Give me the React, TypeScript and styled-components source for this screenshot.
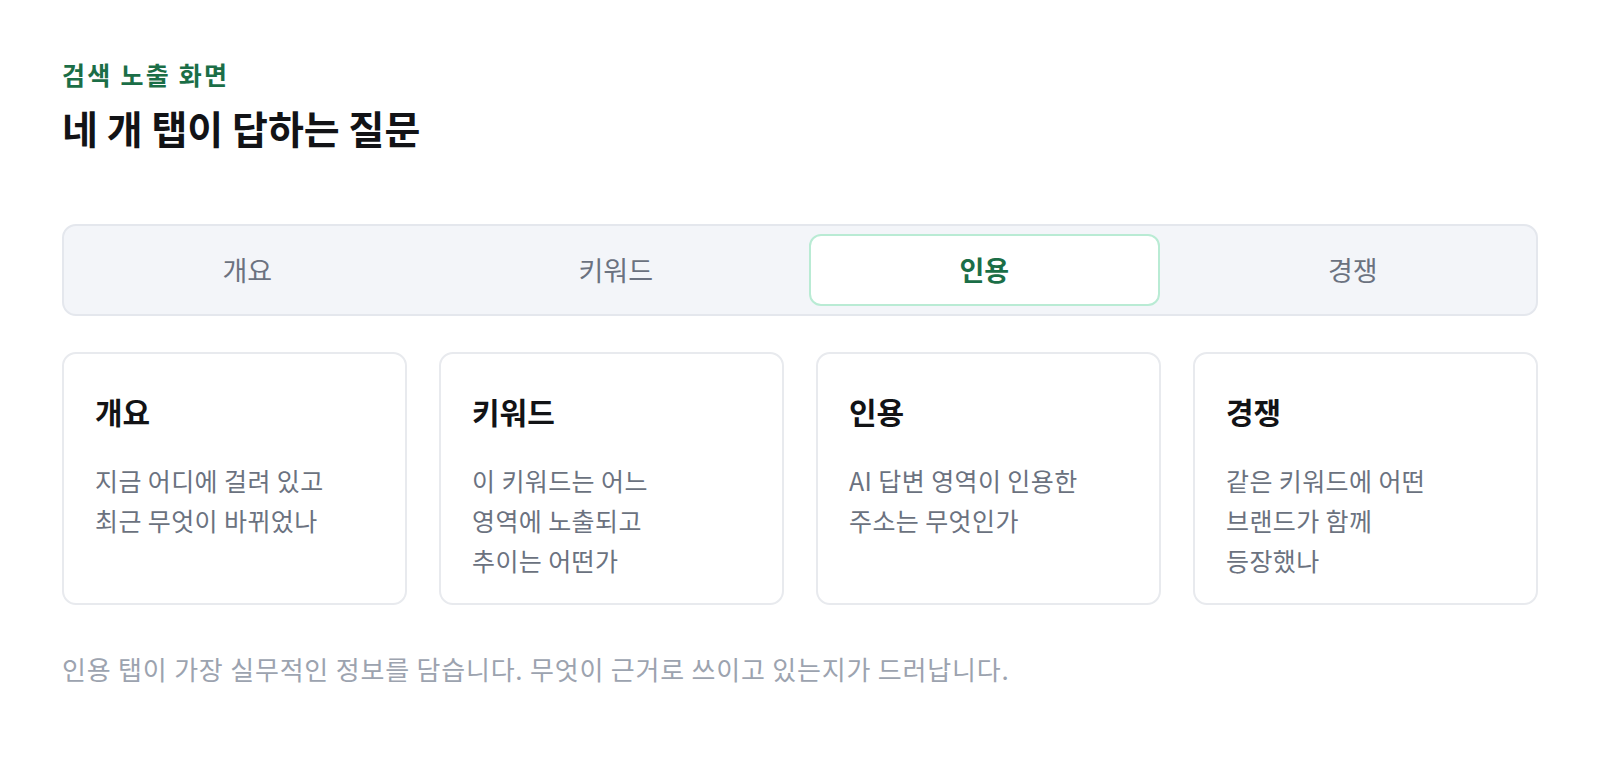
import React, { useState } from 'react';
import styled, { createGlobalStyle } from 'styled-components';

const GlobalStyle = createGlobalStyle`
  * {
    box-sizing: border-box;
  }
  body {
    margin: 0;
    background: #ffffff;
    font-family: "Noto Sans CJK KR", "Noto Sans", "Liberation Sans", sans-serif;
  }
`;

const Page = styled.main`
  padding: 57px 62px 80px;
`;

const Eyebrow = styled.div`
  font-size: 25px;
  line-height: 1.4;
  font-weight: 700;
  letter-spacing: 0.09em;
  color: #1b6e47;
`;

const Heading = styled.h1`
  margin: 8px 0 0;
  font-size: 39px;
  line-height: 1.4;
  font-weight: 700;
  color: #121316;
`;

const TabBar = styled.div`
  margin-top: 69px;
  display: grid;
  grid-template-columns: repeat(4, 1fr);
  gap: 18px;
  padding: 8px;
  background: #f3f5f9;
  border: 2px solid #e4e7ed;
  border-radius: 14px;
`;

const Tab = styled.button<{ $active: boolean }>`
  height: 72px;
  border-radius: 12px;
  border: 2px solid ${p => (p.$active ? '#b9ebd4' : 'transparent')};
  background: ${p => (p.$active ? '#ffffff' : 'transparent')};
  color: ${p => (p.$active ? '#1b6e47' : '#6b7280')};
  font-family: inherit;
  font-size: 27px;
  font-weight: ${p => (p.$active ? 700 : 400)};
  cursor: pointer;
`;

const CardGrid = styled.div`
  margin-top: 36px;
  display: grid;
  grid-template-columns: repeat(4, 1fr);
  gap: 32px;
`;

const Card = styled.div`
  padding: 36px 31px 23px;
  border: 2px solid #e8eaee;
  border-radius: 14px;
  background: #ffffff;
`;

const CardTitle = styled.h3`
  margin: 0;
  font-size: 30px;
  line-height: 1.4;
  font-weight: 700;
  color: #121316;
`;

const CardText = styled.p`
  margin: 28px 0 0;
  font-size: 25px;
  line-height: 40px;
  letter-spacing: 0.4px;
  color: #6b7280;
`;

const Note = styled.p`
  margin: 44px 0 0;
  font-size: 26px;
  line-height: 1.5;
  letter-spacing: 0.8px;
  color: #9ca3af;
`;

const tabs = ['개요', '키워드', '인용', '경쟁'];

const cards = [
  { title: '개요', lines: ['지금 어디에 걸려 있고', '최근 무엇이 바뀌었나'] },
  { title: '키워드', lines: ['이 키워드는 어느', '영역에 노출되고', '추이는 어떤가'] },
  { title: '인용', lines: ['AI 답변 영역이 인용한', '주소는 무엇인가'] },
  { title: '경쟁', lines: ['같은 키워드에 어떤', '브랜드가 함께', '등장했나'] },
];

const App: React.FC = () => {
  const [active, setActive] = useState(2);

  return (
    <Page>
      <GlobalStyle />
      <Eyebrow>검색 노출 화면</Eyebrow>
      <Heading>네 개 탭이 답하는 질문</Heading>
      <TabBar>
        {tabs.map((t, i) => (
          <Tab key={t} $active={i === active} onClick={() => setActive(i)}>
            {t}
          </Tab>
        ))}
      </TabBar>
      <CardGrid>
        {cards.map(c => (
          <Card key={c.title}>
            <CardTitle>{c.title}</CardTitle>
            <CardText>
              {c.lines.map((l, i) => (
                <React.Fragment key={i}>
                  {l}
                  {i < c.lines.length - 1 && <br />}
                </React.Fragment>
              ))}
            </CardText>
          </Card>
        ))}
      </CardGrid>
      <Note>인용 탭이 가장 실무적인 정보를 담습니다. 무엇이 근거로 쓰이고 있는지가 드러납니다.</Note>
    </Page>
  );
};

export default App;
